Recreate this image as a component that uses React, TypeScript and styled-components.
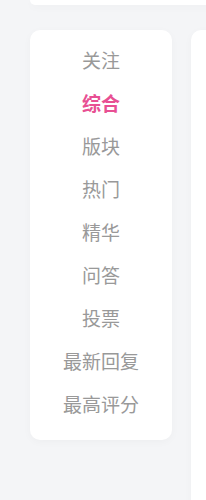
import React from "react";
import styled, { createGlobalStyle } from "styled-components";

const Global = createGlobalStyle`
  html, body { margin: 0; padding: 0; background: #f4f5f7; overflow: hidden; }
  body { font-family: "Noto Sans CJK SC", "Noto Sans", sans-serif; }
`;

const Page = styled.div`
  padding-left: 30px;
  width: 400px;
  height: 500px;
`;

const TopCard = styled.div`
  height: 5px;
  background: #fff;
  border-radius: 0 0 10px 10px;
  box-shadow: 0 2px 8px rgba(0, 0, 0, 0.03);
`;

const Row = styled.div`
  display: flex;
  gap: 19px;
  margin-top: 25px;
  align-items: flex-start;
`;

const Nav = styled.nav`
  width: 142px;
  background: #fff;
  border-radius: 10px;
  padding: 8px 0 15px;
  display: flex;
  flex-direction: column;
  box-shadow: 0 2px 8px rgba(0, 0, 0, 0.03);
`;

const Item = styled.div<{ $active?: boolean }>`
  height: 43px;
  display: flex;
  align-items: center;
  justify-content: center;
  font-size: 19px;
  line-height: 1;
  font-weight: ${(p) => (p.$active ? 700 : 400)};
  color: ${(p) => (p.$active ? "#e84f93" : "#999999")};
`;

const Main = styled.div`
  flex: 1;
  height: 480px;
  background: #fff;
  border-radius: 10px 10px 0 0;
  box-shadow: 0 2px 8px rgba(0, 0, 0, 0.03);
`;

const items = ["关注", "综合", "版块", "热门", "精华", "问答", "投票", "最新回复", "最高评分"];

export default function App() {
  return (
    <>
      <Global />
      <Page>
        <TopCard />
        <Row>
          <Nav>
            {items.map((t) => (
              <Item key={t} $active={t === "综合"}>
                {t}
              </Item>
            ))}
          </Nav>
          <Main />
        </Row>
      </Page>
    </>
  );
}
